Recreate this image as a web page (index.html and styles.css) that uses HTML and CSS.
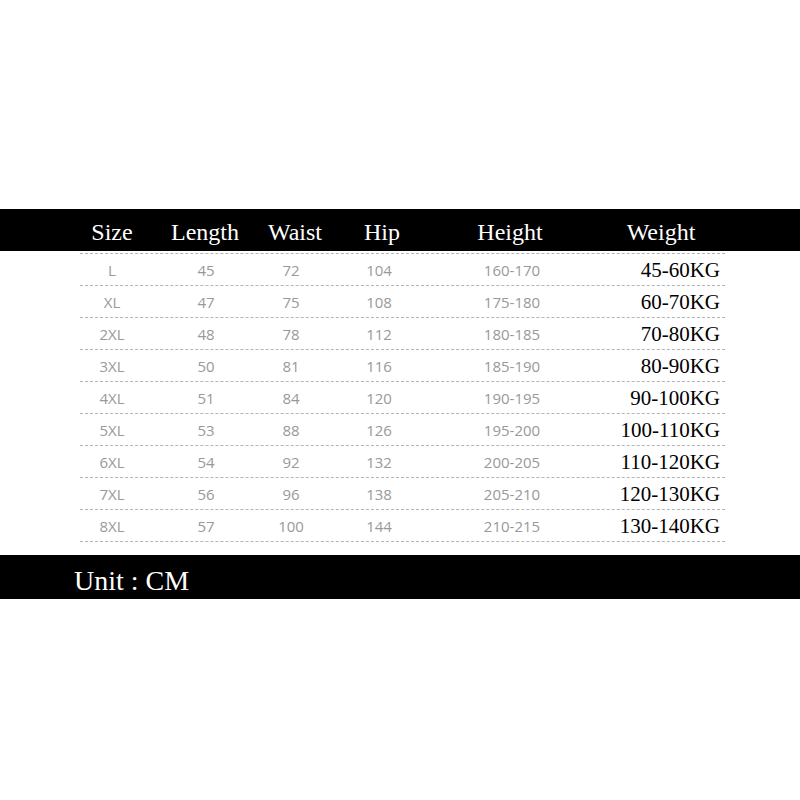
FILE: index.html
```html
<!DOCTYPE html>
<html>
<head>
<meta charset="utf-8">
<link rel="stylesheet" href="styles.css">
</head>
<body>
<div class="page">
  <div class="band head">
    <div class="head-grid">
      <div>Size</div><div>Length</div><div>Waist</div><div>Hip</div><div>Height</div><div>Weight</div>
    </div>
  </div>
  <div class="table">
    <div class="row"><div>L</div><div>45</div><div>72</div><div>104</div><div>160-170</div><div class="kg">45-60KG</div></div>
    <div class="row"><div>XL</div><div>47</div><div>75</div><div>108</div><div>175-180</div><div class="kg">60-70KG</div></div>
    <div class="row"><div>2XL</div><div>48</div><div>78</div><div>112</div><div>180-185</div><div class="kg">70-80KG</div></div>
    <div class="row"><div>3XL</div><div>50</div><div>81</div><div>116</div><div>185-190</div><div class="kg">80-90KG</div></div>
    <div class="row"><div>4XL</div><div>51</div><div>84</div><div>120</div><div>190-195</div><div class="kg">90-100KG</div></div>
    <div class="row"><div>5XL</div><div>53</div><div>88</div><div>126</div><div>195-200</div><div class="kg">100-110KG</div></div>
    <div class="row"><div>6XL</div><div>54</div><div>92</div><div>132</div><div>200-205</div><div class="kg">110-120KG</div></div>
    <div class="row"><div>7XL</div><div>56</div><div>96</div><div>138</div><div>205-210</div><div class="kg">120-130KG</div></div>
    <div class="row last"><div>8XL</div><div>57</div><div>100</div><div>144</div><div>210-215</div><div class="kg">130-140KG</div></div>
  </div>
  <div class="band foot">Unit : CM</div>
</div>
</body>
</html>
```
FILE: styles.css
```css
html, body {
  margin: 0;
  padding: 0;
  background: #ffffff;
}
.page {
  width: 800px;
  height: 800px;
  padding-top: 209px;
  box-sizing: border-box;
}
.band {
  background: #000;
  color: #fff;
  font-family: "Liberation Serif", serif;
}
.head {
  height: 42px;
  box-sizing: border-box;
  padding-top: 4px;
}
.head-grid {
  margin-left: 80px;
  display: grid;
  grid-template-columns: 64px 122px 58px 116px 140px 162px;
  font-size: 24px;
  line-height: 38px;
}
.head-grid > div {
  justify-self: center;
  white-space: nowrap;
}
.table {
  margin-left: 80px;
  width: 645px;
  margin-top: 2px;
}
.row {
  display: grid;
  grid-template-columns: 64px 124px 46px 130px 136px 145px;
  border-top: 1px dashed #b5b5b5;
  height: 32px;
  box-sizing: border-box;
  padding-top: 2px;
  font-family: "Open Sans", sans-serif;
  font-size: 15px;
  line-height: 29px;
  color: #999999;
}
.row > div {
  justify-self: center;
  white-space: nowrap;
}
.row > .kg {
  justify-self: end;
  padding-right: 5px;
  font-family: "Liberation Serif", serif;
  font-size: 21px;
  color: #000;
}
.row.last {
  border-bottom: 1px dashed #b5b5b5;
  height: 33px;
}
.foot {
  margin-top: 13px;
  height: 44px;
  box-sizing: border-box;
  padding-top: 8px;
  padding-left: 74px;
  font-size: 28px;
  line-height: 36px;
}
```
